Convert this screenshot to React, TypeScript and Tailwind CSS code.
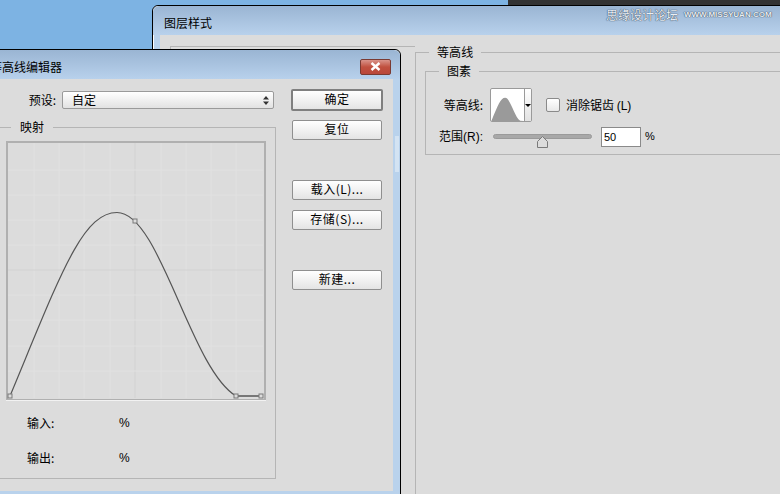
import React from "react";

const font = "font-['Noto_Sans_CJK_SC','Liberation_Sans',sans-serif]";

const curve = "M10 396 C60 276 82 212.5 117 212.5 C160 212.5 190 368 236 396";

function DialogButton({ label, primary }: { label: string; primary?: boolean }) {
  return (
    <button
      className={
        primary
          ? "w-[92px] h-[22px] -ml-px pb-[2px] rounded-[2px] border-2 border-[#7f7f7f] bg-gradient-to-b from-white to-[#e4e4e4] text-[12px] leading-none text-black tracking-[0.5px]"
          : "w-[90px] h-[20px] pb-[2px] rounded-[2px] border border-[#8f8f8f] bg-gradient-to-b from-white to-[#e4e4e4] text-[12px] leading-none text-black tracking-[0.5px]"
      }
    >
      {label}
    </button>
  );
}

function CurveGraph() {
  const xs = [34, 59, 84, 110, 135, 161, 186, 211, 236];
  const ys = [170, 195, 220, 245, 270, 295, 320, 346, 371];
  const handles = [
    [10, 396],
    [135, 221],
    [236, 396],
    [261, 396],
  ];
  return (
    <svg viewBox="6 141 260 260" className="w-[260px] h-[260px] block">
      <rect x="6" y="141" width="260" height="260" fill="#dcdcdc" />
      {xs.map((x) => (
        <line key={x} x1={x} y1="143" x2={x} y2="398" stroke={x === 135 ? "#d2d2d2" : "#e1e1e1"} />
      ))}
      {ys.map((y) => (
        <line key={y} x1="8" y1={y} x2="263" y2={y} stroke={y === 270 ? "#d2d2d2" : "#e1e1e1"} />
      ))}
      <rect x="7" y="142" width="258" height="258" fill="none" stroke="#b0b0b0" strokeWidth="2" />
      <line x1="6" y1="400.5" x2="266" y2="400.5" stroke="#f2f2f2" />
      <path d={curve} fill="none" stroke="#555" strokeWidth="1.2" />
      <line x1="236" y1="396" x2="261" y2="396" stroke="#777" strokeWidth="2" />
      {handles.map(([x, y]) => (
        <rect key={x} x={x - 2} y={y - 2} width="4" height="4" fill="#dcdcdc" stroke="#7a7a7a" />
      ))}
    </svg>
  );
}

function ContourThumb() {
  return (
    <div className="w-[42px] h-[34px] flex rounded-[2px] border border-[#9a9a9a] bg-white overflow-hidden">
      <svg viewBox="6 141 260 258" preserveAspectRatio="none" className="w-[33px] h-[32px] block">
        <path d={`${curve} L262 398 H8 Z`} fill="#9a9a9a" />
      </svg>
      <div className="flex-1 border-l border-[#9a9a9a] bg-gradient-to-b from-white to-[#e2e2e2] flex items-center justify-center">
        <div className="w-0 h-0 border-x-[3px] border-x-transparent border-t-[3px] border-t-black" />
      </div>
    </div>
  );
}

export default function App() {
  return (
    <div className={`relative w-[780px] h-[494px] overflow-hidden bg-[#7db3e3] text-[12px] text-black ${font}`}>
      {/* dark strip behind the windows */}
      <div className="absolute left-[508px] top-0 right-0 h-[5px] bg-[#333333]" />

      {/* layer style window */}
      <div className="absolute left-[152px] top-[5px] w-[640px] h-[500px] rounded-tl-[6px] border border-black shadow-[inset_0_1px_0_#fff,inset_1px_0_0_#fff] flex flex-col bg-[#b9d2ec]">
        <div className="h-[29px] shrink-0 pl-[11px] pt-[8px] leading-[17px] text-[12px] bg-gradient-to-b from-[#9ab5d3] to-[#b8d1ec] rounded-tl-[6px]">
          图层样式
        </div>
        <div className="flex-1 ml-[7px] bg-[#dcdcdc] flex pt-[11px]">
          <div className="w-[245px] shrink-0 ml-[10px] border-l border-t border-[#b5b5b5] h-[440px]" />
          <div className="flex-1">
            <fieldset className="border border-[#b5b5b5] h-[460px] pl-[9px] -mt-[2px]">
              <legend className="ml-[4px] px-2 leading-[16px] text-[12px] tracking-[0.1px]">等高线</legend>
              <fieldset className="mt-[3px] border border-[#b5b5b5] h-[92px] w-[400px]">
                <legend className="ml-[13px] px-2 leading-[16px] text-[12px]">图素</legend>
                <div className="flex items-center mt-[9px] h-[34px]">
                  <span className="w-[57px] text-right leading-none">等高线:</span>
                  <div className="ml-[7px]">
                    <ContourThumb />
                  </div>
                  <div className="ml-[14px] w-[14px] h-[14px] rounded-[2px] border border-[#8a8a8a] bg-gradient-to-b from-white to-[#e8e8e8]" />
                  <span className="ml-[6px] leading-none">
                    消除锯齿 <span className="font-['Liberation_Sans']">(L)</span>
                  </span>
                </div>
                <div className="flex items-center mt-[4px] h-[21px]">
                  <span className="ml-[13px] w-[47px] leading-none">
                    范围<span className="font-['Liberation_Sans']">(R):</span>
                  </span>
                  <div className="relative ml-[7px] w-[99px] h-[5px] rounded-full border border-[#9a9a9a] bg-[#a8a8a8]">
                    <svg viewBox="0 0 11 12" className="absolute left-[43px] top-[1px] w-[11px] h-[12px]">
                      <path d="M5.5 .5 L10.5 5.5 V11.5 H.5 V5.5 Z" fill="#dcdcdc" stroke="#7a7a7a" />
                    </svg>
                  </div>
                  <div className="ml-[9px] w-[40px] h-[20px] border border-[#8a8a8a] bg-white pl-[2px] leading-[18px] font-['Liberation_Sans'] text-[11px]">
                    50
                  </div>
                  <span className="ml-[4px] font-['Liberation_Sans'] text-[11px]">%</span>
                </div>
              </fieldset>
            </fieldset>
          </div>
        </div>
      </div>

      {/* contour editor dialog */}
      <div className="absolute left-[-20px] top-[49px] w-[421px] h-[460px] rounded-tr-[6px] border border-black shadow-[inset_0_1px_0_#fff] flex flex-col bg-[#b9d2ec]">
        <div className="h-[29px] shrink-0 flex items-center justify-between pl-[9px] pr-[9px] pt-[4px] bg-gradient-to-b from-[#9ab5d3] to-[#b8d1ec] rounded-tr-[6px]">
          <span className="text-[12px] leading-none whitespace-nowrap">等高线编辑器</span>
          <div className="w-[31px] h-[16px] rounded-[2px] border border-[#7a3a32] bg-gradient-to-b from-[#d9938a] via-[#c0503f] to-[#b9473a] flex items-center justify-center">
            <svg viewBox="0 0 11 9" className="w-[11px] h-[9px]">
              <path d="M1.5 1 L9.5 8 M9.5 1 L1.5 8" stroke="#fff" strokeWidth="2.4" />
            </svg>
          </div>
        </div>
        <div className="h-[412px] mr-[7px] bg-[#dcdcdc] flex relative">
          <div className="w-[294px] shrink-0">
            <div className="flex items-center h-[18px] mt-[12px]">
              <span className="w-[75px] text-right leading-none">预设:</span>
              <div className="ml-[6px] w-[212px] h-[18px] rounded-[2px] border border-[#9a9a9a] bg-gradient-to-b from-white to-[#e2e2e2] flex items-center justify-between pl-[9px] pr-[4px] leading-none">
                <span>自定</span>
                <svg viewBox="0 0 6 9" className="w-[6px] h-[9px]">
                  <path d="M3 0 L6 3.5 H0 Z M3 9 L6 5.5 H0 Z" fill="#333" />
                </svg>
              </div>
            </div>
            <fieldset className="mt-[10px] h-[360px] border border-[#b5b5b5] w-[296px] -ml-[1px] pl-[27px] relative">
              <legend className="ml-[3px] px-[9px] leading-[16px]">映射</legend>
              <div className="mt-[6px] -ml-[2px]">
                <CurveGraph />
              </div>
              <div className="flex mt-[14px] h-[16px] items-center leading-none">
                <span className="ml-[19px] w-[92px]">输入:</span>
                <span className="font-['Liberation_Sans'] text-[12px]">%</span>
              </div>
              <div className="flex mt-[19px] h-[16px] items-center leading-none">
                <span className="ml-[19px] w-[92px]">输出:</span>
                <span className="font-['Liberation_Sans'] text-[12px]">%</span>
              </div>
            </fieldset>
          </div>
          <div className="ml-[17px] flex flex-col pt-[10px]">
            <DialogButton label="确定" primary />
            <div className="mt-[9px]">
              <DialogButton label="复位" />
            </div>
            <div className="mt-[40px]">
              <DialogButton label="载入(L)..." />
            </div>
            <div className="mt-[10px]">
              <DialogButton label="存储(S)..." />
            </div>
            <div className="mt-[40px]">
              <DialogButton label="新建..." />
            </div>
          </div>
        </div>
        <div className="absolute right-[1px] top-[86px] w-[4px] h-[36px] bg-[#d3e3f3]" />
      </div>

      {/* watermark */}
      <div className="absolute left-[606px] top-[7px] flex items-center whitespace-nowrap text-[#e9eef4] [text-shadow:0_0_1px_#2f4257,0_0_1px_#2f4257]">
        <span className="text-[12px] leading-[16px]">思缘设计论坛</span>
        <span className="ml-[6px] text-[8px] font-bold font-['Liberation_Sans']">WWW.MISSYUAN.COM</span>
      </div>
    </div>
  );
}
